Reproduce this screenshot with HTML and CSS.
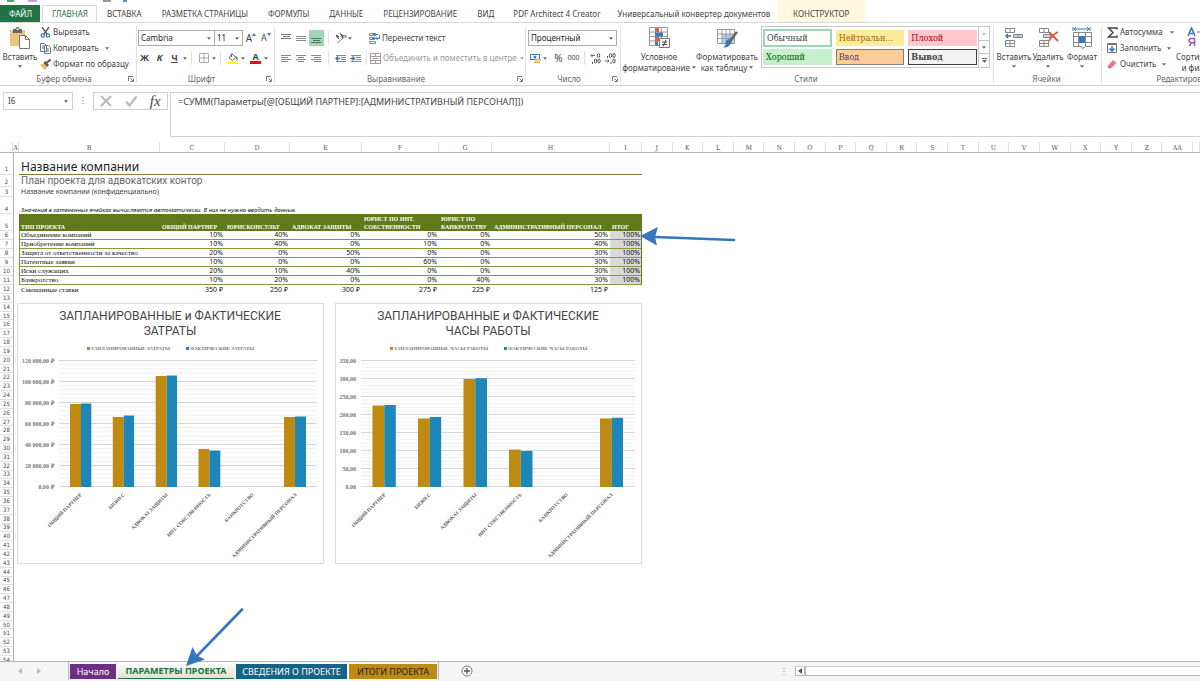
FILE: index.html
```html
<!DOCTYPE html>
<html lang="ru">
<head>
<meta charset="utf-8">
<title>Параметры проекта</title>
<link rel="stylesheet" href="styles.css">
</head>
<body>
<svg class="defs" aria-hidden="true">
  <defs>
    <symbol id="caret" viewBox="0 0 5 3"><path d="M0 0h5L2.500 3z" fill="#666"/></symbol>
    <symbol id="launch" viewBox="0 0 6 6"><path d="M.5 5V.5H5M2.500 2.500 5 5M5.500 2.500V5.500H2.500" fill="none" stroke="#777" stroke-width="1"/></symbol>
  </defs>
</svg>
<header class="top">
  <div class="quick"><i class="q-excel"></i><i class="q-save"></i><i class="q-doc"></i><i class="q-undo"></i></div>
  <nav class="tabs">
    <button class="tab file">ФАЙЛ</button>
    <button class="tab active">ГЛАВНАЯ</button>
    <button class="tab">ВСТАВКА</button>
    <button class="tab">РАЗМЕТКА СТРАНИЦЫ</button>
    <button class="tab">ФОРМУЛЫ</button>
    <button class="tab">ДАННЫЕ</button>
    <button class="tab">РЕЦЕНЗИРОВАНИЕ</button>
    <button class="tab">ВИД</button>
    <button class="tab addin">PDF Architect 4 Creator</button>
    <button class="tab addin">Универсальный конвертер документов</button>
    <button class="tab context">КОНСТРУКТОР</button>
  </nav>
</header>

<section class="ribbon">
  <div class="group clipboard">
    <div class="body">
      <button class="big paste">
        <svg width="22" height="22" viewBox="0 0 22 22"><path d="M1 3h15v16H1z" fill="#ecc57c"/><path d="M4 2h2.500a2 2 0 0 1 4 0H13v4H4z" fill="#666"/><path d="M7.500 1.500h2v1.500h-2z" fill="#fff"/><path d="M10.500 8.500h6l4 4v9h-10z" fill="#fff" stroke="#777"/><path d="M16.500 8.500v4h4" fill="none" stroke="#777"/></svg>
        <span>Вставить</span><svg class="caret"><use href="#caret"/></svg>
      </button>
      <div class="stack">
        <button class="cmd"><svg width="11" height="11" viewBox="0 0 11 11"><path d="M2 0l5 7M9 0 4 7" stroke="#555" stroke-width="1.300"/><circle cx="2.800" cy="8.500" r="1.700" fill="none" stroke="#3b78b5" stroke-width="1.200"/><circle cx="8" cy="8.500" r="1.700" fill="none" stroke="#3b78b5" stroke-width="1.200"/></svg>Вырезать</button>
        <button class="cmd"><svg width="11" height="11" viewBox="0 0 11 11"><path d="M.5.5h4l2 2v6h-6zM4.500 2.500h4l2 2v6h-6z" fill="#fff" stroke="#777"/><path d="M2 3h2M2 5h2M6 6h3M6 8h3" stroke="#3b78b5"/></svg>Копировать<svg class="caret"><use href="#caret"/></svg></button>
        <button class="cmd"><svg width="11" height="11" viewBox="0 0 11 11"><path d="M0 6l4-2 3 4-2 3z" fill="#ecb866"/><path d="M3.500 3.500 5.500 2 9 6 7 8z" fill="#555"/><path d="M7 3.500 10.500.5" stroke="#555" stroke-width="2"/></svg>Формат по образцу</button>
      </div>
    </div>
    <div class="caption"><span>Буфер обмена</span><svg class="launch"><use href="#launch"/></svg></div>
  </div>

  <div class="group font">
    <div class="rows">
      <div class="row">
        <label class="combo face"><select aria-label="Шрифт"><option>Cambria</option></select><svg class="caret"><use href="#caret"/></svg></label>
        <label class="combo size"><select aria-label="Размер"><option>11</option></select><svg class="caret"><use href="#caret"/></svg></label>
        <button class="ic grow" aria-label="Увеличить"><b>A</b><svg width="4" height="3" viewBox="0 0 4 3"><path d="M0 3 2 0l2 3z" fill="#3b78b5"/></svg></button>
        <button class="ic grow small" aria-label="Уменьшить"><b>A</b><svg width="4" height="3" viewBox="0 0 4 3"><path d="M0 0h4L2 3z" fill="#3b78b5"/></svg></button>
      </div>
      <div class="row">
        <button class="ic"><b>Ж</b></button><button class="ic"><b><em>К</em></b></button><button class="ic"><b><u>Ч</u></b></button><svg class="caret"><use href="#caret"/></svg>
        <i class="bar"></i>
        <button class="ic" aria-label="Границы"><svg width="10" height="10" viewBox="0 0 10 10"><path d="M.5.5h9v9h-9zM5 0v10M0 5h10" fill="none" stroke="#aaa"/></svg></button><svg class="caret"><use href="#caret"/></svg>
        <i class="bar"></i>
        <button class="ic" aria-label="Заливка"><svg width="12" height="11" viewBox="0 0 12 11"><path d="M5 1 9 4.500 5.500 7.500 2 4.500z" fill="#fff" stroke="#666"/><path d="M4.500 4V.5" stroke="#666"/><path d="M9 3q3 2 1 5-1-1-1-5" fill="#3b78b5"/><path d="M0 8.500h11V11H0z" fill="#ff0"/></svg></button><svg class="caret"><use href="#caret"/></svg>
        <button class="ic color" aria-label="Цвет текста"><b>A</b></button><svg class="caret"><use href="#caret"/></svg>
      </div>
    </div>
    <div class="caption"><span>Шрифт</span><svg class="launch"><use href="#launch"/></svg></div>
  </div>

  <div class="group align">
    <div class="rows">
      <div class="row">
        <button class="ic" aria-label="По верху"><svg width="11" height="11" viewBox="0 0 11 11"><path d="M0 1.500h10M2 3.500h7M0 5.500h10" stroke="#777"/></svg></button>
        <button class="ic" aria-label="По середине"><svg width="11" height="11" viewBox="0 0 11 11"><path d="M0 3.500h10M0 5.500h10M0 7.500h10" stroke="#888"/></svg></button>
        <button class="ic on" aria-label="По низу"><svg width="11" height="11" viewBox="0 0 11 11"><path d="M0 5.500h10M2 7.500h7M0 9.500h10" stroke="#4f7a62"/></svg></button>
        <i class="bar"></i>
        <button class="ic" aria-label="Ориентация"><svg width="12" height="12" viewBox="0 0 12 12"><path d="M2 11 11 4M8 3.500h3v3" fill="none" stroke="#888"/><path d="M1 3l3 4M3 6q-2-1-1-2t2 1M5 1l3 5M6 3q2-1 2 1T6.500 5" fill="none" stroke="#444"/></svg></button><svg class="caret"><use href="#caret"/></svg>
        <button class="cmd wrap"><svg width="11" height="11" viewBox="0 0 11 11"><path d="M.5.500h6v2h-6zM.5 4.500h5v2h-5zM.5 8.500h6v2h-6z" fill="#fff" stroke="#888"/><path d="M4 1.500h5M3 5.500h4" stroke="#3b78b5"/><path d="M10.500 2v3.500H7M8.500 4 7 5.500 8.500 7" fill="none" stroke="#3b78b5"/></svg>Перенести текст</button>
      </div>
      <div class="row">
        <button class="ic" aria-label="Слева"><svg width="11" height="9" viewBox="0 0 11 9"><path d="M0 1.500h10M0 3.500h7M0 5.500h10M0 7.500h7" stroke="#888"/></svg></button>
        <button class="ic" aria-label="По центру"><svg width="11" height="9" viewBox="0 0 11 9"><path d="M0 1.500h10M2 3.500h6M0 5.500h10M2 7.500h6" stroke="#888"/></svg></button>
        <button class="ic" aria-label="Справа"><svg width="11" height="9" viewBox="0 0 11 9"><path d="M0 1.500h10M3 3.500h7M0 5.500h10M3 7.500h7" stroke="#888"/></svg></button>
        <i class="bar"></i>
        <button class="ic" aria-label="Уменьшить отступ"><svg width="11" height="9" viewBox="0 0 11 9"><path d="M1 1.500h10M6 3.500h5M6 5.500h5M1 7.500h10" stroke="#888"/><path d="M5 4.500H1M3 2.500l-2 2 2 2" fill="none" stroke="#3b78b5" stroke-width="1.400"/></svg></button>
        <button class="ic" aria-label="Увеличить отступ"><svg width="11" height="9" viewBox="0 0 11 9"><path d="M1 1.500h10M6 3.500h5M6 5.500h5M1 7.500h10" stroke="#888"/><path d="M0 4.500h4M2.500 2.500l2 2-2 2" fill="none" stroke="#3b78b5" stroke-width="1.400"/></svg></button>
        <i class="bar tight"></i>
        <button class="cmd off"><svg width="11" height="11" viewBox="0 0 11 11"><path d="M.5.500h10v10H.5zM.5 3.500h10M.5 7.500h10M5.500.5v3M5.500 7.500v3M2.500 5.500h6" fill="none" stroke="#a49ba4"/></svg>Объединить и поместить в центре<svg class="caret"><use href="#caret"/></svg></button>
      </div>
    </div>
    <div class="caption"><span>Выравнивание</span><svg class="launch"><use href="#launch"/></svg></div>
  </div>

  <div class="group number">
    <div class="rows">
      <div class="row">
        <label class="combo format"><select aria-label="Числовой формат"><option>Процентный</option></select><svg class="caret"><use href="#caret"/></svg></label>
      </div>
      <div class="row">
        <button class="ic money" aria-label="Финансовый"><svg width="11" height="11" viewBox="0 0 11 11"><path d="M.5 1.500h9v5h-9z" fill="#fff" stroke="#3b78b5"/><circle cx="5" cy="4" r="1.500" fill="#3b78b5"/><path d="M5 6h6v1.500H5zM4 8.500h6V10H4z" fill="#e9ac4f"/></svg></button><svg class="caret"><use href="#caret"/></svg>
        <button class="ic percent">%</button><button class="ic thousand">000</button>
        <i class="bar tight"></i>
        <button class="ic" aria-label="Увеличить разрядность"><svg width="11" height="11" viewBox="0 0 11 11"><path d="M5 2.500H1M2.500 1 1 2.500 2.500 4" fill="none" stroke="#3b78b5"/><ellipse cx="8.500" cy="2.500" rx="1.200" ry="2" fill="none" stroke="#555"/><ellipse cx="5.500" cy="8" rx="1.200" ry="2" fill="none" stroke="#555"/><ellipse cx="9" cy="8" rx="1.200" ry="2" fill="none" stroke="#555"/><path d="M2.500 9v2" stroke="#555"/></svg></button>
        <button class="ic" aria-label="Уменьшить разрядность"><svg width="11" height="11" viewBox="0 0 11 11"><path d="M0 8h4M2.500 6.500 4 8 2.500 9.500" fill="none" stroke="#3b78b5"/><ellipse cx="5.500" cy="2.500" rx="1.200" ry="2" fill="none" stroke="#555"/><ellipse cx="9" cy="2.500" rx="1.200" ry="2" fill="none" stroke="#555"/><ellipse cx="9" cy="8" rx="1.200" ry="2" fill="none" stroke="#555"/><path d="M2.500 3v2M6 9v2" stroke="#555"/></svg></button>
      </div>
    </div>
    <div class="caption"><span>Число</span><svg class="launch"><use href="#launch"/></svg></div>
  </div>

  <div class="group styles">
    <div class="body">
      <button class="big wide">
        <svg width="22" height="22" viewBox="0 0 22 22"><path d="M1.500.5h18v18h-18zM1.500 5h18M1.500 9.500h18M1.500 14h18M7.500.5v18M13.500.5v18" fill="#fff" stroke="#999"/><path d="M7 1h4v4H7zM7 10h4v4H7z" fill="#e0603c"/><path d="M7 5.500h8v4H7zM7 14.500h3v4H7z" fill="#3b78b5"/><path d="M11.500 11.500h10v9h-10z" fill="#fff" stroke="#777"/><path d="M14 15h5M14 17.500h5M18 13l-3 6.500" stroke="#444"/></svg>
        <span>Условное</span><span>форматирование <svg class="caret"><use href="#caret"/></svg></span>
      </button>
      <button class="big wide">
        <svg width="22" height="22" viewBox="0 0 22 22"><path d="M1.500 2.500h17v14h-17z" fill="#fff" stroke="#999"/><path d="M6 7h12v9H6z" fill="#b9d0e8"/><path d="M1.500 7h17M1.500 11.500h17M6 2.500v14M10 2.500v14M14 2.500v14" fill="none" stroke="#999"/><path d="M21 5l-7 9" stroke="#666" stroke-width="2.500"/><path d="M13 12l3 3q-3 6-9 5.500 3-2 2.500-4.500Q10.500 12.500 13 12" fill="#3b78b5"/></svg>
        <span>Форматировать</span><span>как таблицу <svg class="caret"><use href="#caret"/></svg></span>
      </button>
      <div class="gallery">
        <div class="swatches">
          <button class="sw normal">Обычный</button><button class="sw neutral">Нейтральн...</button><button class="sw bad">Плохой</button>
          <button class="sw good">Хороший</button><button class="sw input">Ввод</button><button class="sw output">Вывод</button>
        </div>
        <div class="steps">
          <button aria-label="Вверх"><svg class="caret up"><use href="#caret"/></svg></button>
          <button aria-label="Вниз"><svg class="caret"><use href="#caret"/></svg></button>
          <button class="more" aria-label="Ещё"><svg width="5" height="5" viewBox="0 0 5 5"><path d="M0 .5h5" stroke="#666"/><path d="M0 2h5L2.500 5z" fill="#666"/></svg></button>
        </div>
      </div>
    </div>
    <div class="caption"><span>Стили</span></div>
  </div>

  <div class="group cells">
    <div class="body">
      <button class="big"><svg width="22" height="22" viewBox="0 0 22 22"><path d="M2.500 1.500h9v4h-9zM7 1.500v4M2.500 13.500h9v6h-9zM7 13.500v6M2.500 16.500h9" fill="#fff" stroke="#888"/><path d="M10.500 7.500h9v3h-9zM15 7.500v3" fill="#c5d9ee" stroke="#888"/><path d="M8 9H3M5 7 3 9l2 2" fill="none" stroke="#3b78b5" stroke-width="1.500"/></svg><span>Вставить</span><svg class="caret"><use href="#caret"/></svg></button>
      <button class="big"><svg width="22" height="22" viewBox="0 0 22 22"><path d="M2.500 1.500h9v4h-9zM7 1.500v4M2.500 13.500h9v6h-9zM7 13.500v6M2.500 16.500h9" fill="#fff" stroke="#888"/><path d="M6.500 7.500h7v3h-7z" fill="#c5d9ee" stroke="#888"/><path d="M12 5l9 9M21 5q-6 3-9 9" fill="none" stroke="#e0553a" stroke-width="1.800"/></svg><span>Удалить</span><svg class="caret"><use href="#caret"/></svg></button>
      <button class="big"><svg width="22" height="22" viewBox="0 0 22 22"><path d="M3 2h15M5 0 3 2l2 2M16 0l2 2-2 2M2 0v4M19 0v4" fill="none" stroke="#3b78b5"/><path d="M2.500 5.500h18v14h-6l-3 2-1-2h-8zM2.500 9.500h18M2.500 15.500h18M7.500 5.500v14M14.500 5.500v14" fill="#fff" stroke="#888"/><path d="M8 9h6v7H8z" fill="#3b78b5"/></svg><span>Формат</span><svg class="caret"><use href="#caret"/></svg></button>
    </div>
    <div class="caption"><span>Ячейки</span></div>
  </div>

  <div class="group editing">
    <div class="body">
      <div class="stack">
        <button class="cmd"><svg width="11" height="11" viewBox="0 0 11 11"><path d="M10 2.500V1H1.500L6 5.500 1.500 10H10V8.500" fill="none" stroke="#444" stroke-width="1.500"/></svg>Автосумма<svg class="caret far"><use href="#caret"/></svg></button>
        <button class="cmd"><svg width="11" height="11" viewBox="0 0 11 11"><path d="M.5.500h9v9h-9z" fill="#fff" stroke="#777"/><path d="M0 1.500h10" stroke="#777"/><path d="M5 3v5M2.500 5.500 5 8l2.500-2.500" fill="none" stroke="#3b78b5" stroke-width="1.600"/></svg>Заполнить<svg class="caret"><use href="#caret"/></svg></button>
        <button class="cmd"><svg width="11" height="11" viewBox="0 0 11 11"><path d="M6 1l3.500 3-5 5H2L.5 7z" fill="#e77b8b"/><path d="M.5 7 4 9.500H2z" fill="#c9566a"/></svg>Очистить<svg class="caret"><use href="#caret"/></svg></button>
      </div>
      <button class="big sort"><svg width="28" height="22" viewBox="0 0 28 22"><path d="M3 9 6.500 1 10 9M4 6.500h5" fill="none" stroke="#3b78b5" stroke-width="1.600"/><path d="M9.500 19v-7.500H6q-2 .5-2 2t2 2.200h3.500M7 15.500 4 19" fill="none" stroke="#8e57b8" stroke-width="1.500"/><path d="M12 5h9l-4 5v6" fill="none" stroke="#666"/></svg><span>Сортировка</span><span>и фильтр</span></button>
    </div>
    <div class="caption"><span>Редактирование</span></div>
  </div>
</section>

<section class="formula">
  <div class="name"><input value="I6" aria-label="Имя ячейки"><svg class="caret"><use href="#caret"/></svg></div>
  <i class="dots"></i>
  <div class="fx">
    <button aria-label="Отмена"><svg width="12" height="12" viewBox="0 0 12 12"><path d="M1 1l10 10M11 1 1 11" stroke="#b8b8b8" stroke-width="2"/></svg></button>
    <button aria-label="Ввод"><svg width="12" height="12" viewBox="0 0 12 12"><path d="M1 6.500 4.500 10.500 11.500 1.500" fill="none" stroke="#bbb" stroke-width="2.200"/></svg></button>
    <button class="fn">fx</button>
  </div>
  <textarea aria-label="Строка формул" spellcheck="false">=СУММ(Параметры[@[ОБЩИЙ ПАРТНЕР]:[АДМИНИСТРАТИВНЫЙ ПЕРСОНАЛ]])</textarea>
</section>

<main class="grid">
  <div class="cols">
    <span class="corner"></span><span>A</span><span>B</span><span>C</span><span>D</span><span>E</span><span>F</span><span>G</span><span>H</span><span>I</span><span>J</span><span>K</span><span>L</span><span>M</span><span>N</span><span>O</span><span>P</span><span>Q</span><span>R</span><span>S</span><span>T</span><span>U</span><span>V</span><span>W</span><span>X</span><span>Y</span><span>Z</span><span>AA</span><span></span>
  </div>
  <div class="sheet">
    <div class="nums">
      <span class="r1">1</span><span class="r2">2</span><span class="r3">3</span><span class="r4">4</span><span class="r5">5</span><span>6</span><span>7</span><span>8</span><span>9</span><span>10</span><span>11</span><span>12</span>
      <div class="rest"><span>13</span><span>14</span><span>15</span><span>16</span><span>17</span><span>18</span><span>19</span><span>20</span><span>21</span><span>22</span><span>23</span><span>24</span><span>25</span><span>26</span><span>27</span><span>28</span><span>29</span><span>30</span><span>31</span><span>32</span><span>33</span><span>34</span><span>35</span><span>36</span><span>37</span><span>38</span><span>39</span><span>40</span><span>41</span><span>42</span><span>43</span><span>44</span><span>45</span><span>46</span><span>47</span><span>48</span><span>49</span><span>50</span><span>51</span><span>52</span><span>53</span><span>54</span></div>
    </div>
    <div class="page">
      <h1>Название компании</h1>
      <h2>План проекта для адвокатских контор</h2>
      <p class="sub">Название компании (конфиденциально)</p>
      <p class="note">Значения в затененных ячейках вычисляются автоматически. В них не нужно вводить данные.</p>
      <table>
        <colgroup><col class="cb"><col class="cc"><col class="cc"><col class="ce"><col class="cf"><col class="cg"><col class="ch"><col class="ci"></colgroup>
        <thead><tr><th>ТИП ПРОЕКТА</th><th>ОБЩИЙ ПАРТНЕР</th><th>ЮРИСКОНСУЛЬТ</th><th>АДВОКАТ ЗАЩИТЫ</th><th>ЮРИСТ ПО ИНТ.<br>СОБСТВЕННОСТИ</th><th>ЮРИСТ ПО<br>БАНКРОТСТВУ</th><th>АДМИНИСТРАТИВНЫЙ ПЕРСОНАЛ</th><th>ИТОГ</th></tr></thead>
        <tbody>
          <tr><td>Объединение компаний</td><td>10%</td><td>40%</td><td>0%</td><td>0%</td><td>0%</td><td>50%</td><td>100%</td></tr>
          <tr><td>Приобретение компаний</td><td>10%</td><td>40%</td><td>0%</td><td>10%</td><td>0%</td><td>40%</td><td>100%</td></tr>
          <tr><td>Защита от ответственности за качество</td><td>20%</td><td>0%</td><td>50%</td><td>0%</td><td>0%</td><td>30%</td><td>100%</td></tr>
          <tr><td>Патентные заявки</td><td>10%</td><td>0%</td><td>0%</td><td>60%</td><td>0%</td><td>30%</td><td>100%</td></tr>
          <tr><td>Иски служащих</td><td>20%</td><td>10%</td><td>40%</td><td>0%</td><td>0%</td><td>30%</td><td>100%</td></tr>
          <tr><td>Банкротство</td><td>10%</td><td>20%</td><td>0%</td><td>0%</td><td>40%</td><td>30%</td><td>100%</td></tr>
        </tbody>
        <tfoot><tr><td>Смешанные ставки</td><td>350 ₽</td><td>250 ₽</td><td>300 ₽</td><td>275 ₽</td><td>225 ₽</td><td>125 ₽</td><td></td></tr></tfoot>
      </table>
      <div class="charts">
        <svg class="chart" viewBox="18 304 305 259" role="img" aria-label="Запланированные и фактические затраты">
          <defs><pattern id="m1" x="0" y="360" width="10" height="4.200" patternUnits="userSpaceOnUse"><path d="M0 .5h10" stroke="#efefef"/></pattern></defs>
          <text class="ttl" x="170" y="320">ЗАПЛАНИРОВАННЫЕ и ФАКТИЧЕСКИЕ</text><text class="ttl" x="170" y="335">ЗАТРАТЫ</text>
          <path class="plan" d="M87 347h3v3h-3z"/><text class="lg" x="91" y="350">ЗАПЛАНИРОВАННЫЕ ЗАТРАТЫ</text>
          <path class="fact" d="M186 347h3v3h-3z"/><text class="lg" x="190" y="350">ФАКТИЧЕСКИЕ ЗАТРАТЫ</text>
          <path d="M59 360h257.500v126H59z" fill="url(#m1)"/>
          <path class="maj" d="M59 360.500h258M59 381.500h258M59 402.500h258M59 423.500h258M59 444.500h258M59 465.500h258M59 486.500h258"/>
          <g class="val"><text x="53.500" y="363">120 000,00 ₽</text><text x="53.500" y="384">100 000,00 ₽</text><text x="53.500" y="405">80 000,00 ₽</text><text x="53.500" y="426">60 000,00 ₽</text><text x="53.500" y="447">40 000,00 ₽</text><text x="53.500" y="468">20 000,00 ₽</text><text x="53.500" y="489">0,00 ₽</text></g>
          <path class="plan" d="M70 404h11v83H70zM112.800 417h11v70h-11zM155.700 376h11v111h-11zM198.500 449h11v38h-11zM284 417h11v70h-11z"/>
          <path class="fact" d="M81 403.500h10.300v83.500H81zM123.800 415.500h10.300v71.500h-10.300zM166.700 375.500H177V487h-10.300zM209.500 450.500h10.800V487h-10.800zM295 416.500h11V487h-11z"/>
          <g class="cat"><text transform="translate(82 495)rotate(-45)">ОБЩИЙ ПАРТНЕР</text><text transform="translate(125 495)rotate(-45)">БИЗНЕС</text><text transform="translate(168 495)rotate(-45)">АДВОКАТ ЗАЩИТЫ</text><text transform="translate(211 495)rotate(-45)">ИНТ. СОБСТВЕННОСТЬ</text><text transform="translate(254 495)rotate(-45)">БАНКРОТСТВО</text><text transform="translate(297 495)rotate(-45)">АДМИНИСТРАТИВНЫЙ ПЕРСОНАЛ</text></g>
        </svg>
        <svg class="chart" viewBox="336 304 305 259" role="img" aria-label="Запланированные и фактические часы работы">
          <defs><pattern id="m2" x="0" y="360" width="10" height="3.600" patternUnits="userSpaceOnUse"><path d="M0 .5h10" stroke="#efefef"/></pattern></defs>
          <text class="ttl" x="488" y="320">ЗАПЛАНИРОВАННЫЕ и ФАКТИЧЕСКИЕ</text><text class="ttl" x="488" y="335">ЧАСЫ РАБОТЫ</text>
          <path class="plan" d="M390 347h3v3h-3z"/><text class="lg" x="394" y="350">ЗАПЛАНИРОВАННЫЕ ЧАСЫ РАБОТЫ</text>
          <path class="fact" d="M504 347h3v3h-3z"/><text class="lg" x="508" y="350">ФАКТИЧЕСКИЕ ЧАСЫ РАБОТЫ</text>
          <path d="M361 360h274v126H361z" fill="url(#m2)"/>
          <path class="maj" d="M361 360.500h274M361 378.500h274M361 396.500h274M361 414.500h274M361 432.500h274M361 450.500h274M361 468.500h274M361 486.500h274"/>
          <g class="val"><text x="356" y="363">350,00</text><text x="356" y="381">300,00</text><text x="356" y="399">250,00</text><text x="356" y="417">200,00</text><text x="356" y="435">150,00</text><text x="356" y="453">100,00</text><text x="356" y="471">50,00</text><text x="356" y="489">0,00</text></g>
          <path class="plan" d="M372.500 405.500h11.800V487h-11.800zM418 418.500h11.800V487H418zM463.500 379h11.800v108h-11.800zM509 449.500h11.800V487H509zM600 418.500h11.800V487H600z"/>
          <path class="fact" d="M384.300 405h11.500v82h-11.500zM429.800 417h11.400v70h-11.400zM475.300 378.300h11.700V487h-11.700zM520.800 451h11.700v36h-11.700zM611.800 417.800H623V487h-11.200z"/>
          <g class="cat"><text transform="translate(386 495)rotate(-45)">ОБЩИЙ ПАРТНЕР</text><text transform="translate(431 495)rotate(-45)">БИЗНЕС</text><text transform="translate(477 495)rotate(-45)">АДВОКАТ ЗАЩИТЫ</text><text transform="translate(522 495)rotate(-45)">ИНТ. СОБСТВЕННОСТЬ</text><text transform="translate(568 495)rotate(-45)">БАНКРОТСТВО</text><text transform="translate(613 495)rotate(-45)">АДМИНИСТРАТИВНЫЙ ПЕРСОНАЛ</text></g>
        </svg>
      </div>
    </div>
    <svg class="marks" width="760" height="528" viewBox="0 153 760 528" aria-hidden="true">
      <path d="M734 240 655 237M242 609.500 195 658" stroke="#3576bd" stroke-width="2.600" stroke-linecap="round"/>
      <path d="M640 236l18-9-3 10 2 8.500zM186 666l6.500-19 4.500 8.500 8 4z" fill="#3576bd"/>
    </svg>
  </div>
</main>

<footer class="bottom">
  <div class="nav"><button aria-label="Назад"><svg width="4" height="6" viewBox="0 0 4 6"><path d="M4 0v6L0 3z" fill="#bbb"/></svg></button><button aria-label="Вперёд"><svg width="4" height="6" viewBox="0 0 4 6"><path d="M0 0v6l4-3z" fill="#bbb"/></svg></button></div>
  <div class="books">
    <button class="book start">Начало</button>
    <button class="book current">ПАРАМЕТРЫ ПРОЕКТА</button>
    <button class="book info">СВЕДЕНИЯ О ПРОЕКТЕ</button>
    <button class="book total">ИТОГИ ПРОЕКТА</button>
  </div>
  <button class="add" aria-label="Новый лист"><svg width="12" height="12" viewBox="0 0 12 12"><circle cx="6" cy="6" r="5" fill="#fff" stroke="#777"/><path d="M3 6h6M6 3v6" stroke="#555" stroke-width="1.300"/></svg></button>
  <i class="dots"></i>
  <div class="scroll"><button aria-label="Влево"><svg width="4" height="6" viewBox="0 0 4 6"><path d="M4 0v6L0 3z" fill="#555"/></svg></button></div>
</footer>
</body>
</html>
```
FILE: styles.css
```css
* { box-sizing: border-box; }
html, body { height: 100%; }
body {
  margin: 0;
  display: flex;
  flex-direction: column;
  overflow: hidden;
  background: #fff;
  color: #444;
  font: 8px/10px "Noto Sans", "Open Sans", sans-serif;
}
button, input, select, textarea {
  font: inherit;
  color: inherit;
  margin: 0;
  padding: 0;
  border: 0;
  background: none;
  border-radius: 0;
  white-space: nowrap;
}
svg { display: block; flex: none; }
h1, h2, p { margin: 0; font-weight: 400; }
.defs { position: absolute; width: 0; height: 0; }
.caret { width: 4px; height: 3px; }
.launch { width: 6px; height: 6px; }

/* title strip and ribbon tabs */
.quick { height: 5px; display: flex; align-items: flex-start; padding-left: 7px; }
.quick i { height: 2px; }
.q-excel { width: 7px; background: #4ea577; margin-right: 14px; }
.q-save { width: 9px; background: #c9a3da; margin-right: 66px; }
.q-doc { width: 8px; background: #999; margin-right: 12px; }
.q-undo { width: 4px; background: #5c93cc; }
.tabs { display: flex; height: 17px; }
.tab { padding: 0 9px; margin-right: 2px; font-size: 8px; line-height: 17px; }
.file { width: 40px; background: #217346; color: #fff; }
.active { width: 55px; margin-right: 1px; background: #fff; border: 1px solid #d8d8d8; border-bottom: 0; color: #217346; line-height: 15px; padding-bottom: 1px; }
.addin { padding: 0 8px; margin-right: 1px; }
.context { width: 88px; margin: -5px 0 0 -2px; padding-top: 5px; background: #fff8e1; }

/* ribbon */
.ribbon { display: flex; height: 64px; border-top: 1px solid #d8d8d8; border-bottom: 1px solid #d0d0d0; overflow: hidden; flex: none; }
.group { flex: none; display: flex; flex-direction: column; padding: 1px 0; position: relative; }
.group::after { content: ""; position: absolute; right: 0; top: 3px; bottom: 2px; width: 1px; background: #e1e1e1; }
.body { display: flex; flex: 1; }
.rows { flex: 1; padding-top: 4px; }
.row { display: flex; align-items: center; height: 20px; }
.caption { display: flex; height: 10px; align-items: center; color: #666; padding-right: 3px; }
.caption span { flex: 1; text-align: center; }
.clipboard { width: 137px; }
.font { width: 138px; }
.align { width: 251px; }
.number { width: 95px; }
.styles { width: 373px; }
.cells { width: 108px; }
.editing { width: 176px; }
.big { display: flex; flex-direction: column; align-items: center; padding-top: 3px; width: 34px; flex: none; }
.big > svg:first-child { margin-bottom: 2px; }
.big > span { display: flex; align-items: center; gap: 2px; line-height: 11px; }
.big > .caret { margin-top: 3px; }
.paste { width: 40px; }
.wide { width: 68px; }
.styles .body { padding-left: 4px; }
.stack { display: flex; flex-direction: column; }
.cmd { display: flex; align-items: center; gap: 2px; height: 16px; }
.cmd .caret { margin-left: 4px; }
.cmd .far { margin-left: 5px; }
.wrap { margin-left: 17px; }
.off { color: #999; }
.off .caret { opacity: .6; margin-left: 1px; }

.ic { width: 15px; height: 16px; display: flex; align-items: center; justify-content: center; flex: none; font-size: 9px; }
.on { background: #9fd5b7; }
.bar { width: 1px; height: 14px; background: #e1e1e1; margin: 0 4px; }
.tight { margin: 0 3px; }
.combo { position: relative; flex: none; height: 16px; border: 1px solid #ababab; color: #222; }
.combo select { appearance: none; width: 100%; height: 14px; padding-left: 2px; display: block; }
.combo .caret { position: absolute; right: 3px; top: 6px; }
.face { width: 77px; margin-left: 1px; }
.size { width: 29px; margin-left: -1px; }
.format { width: 89px; margin-left: 2px; }
.font .row > .caret { margin-left: 1px; }
.grow { margin-left: 1px; width: 14px; }
.grow b { font-weight: 400; font-size: 10px; }
.grow svg { margin-bottom: 8px; }
.grow.small b { font-size: 9px; }
.color { margin-left: 3px; }
.color b { border-bottom: 3px solid red; line-height: 8px; padding: 0 2px; }
.money { margin-left: 2px; }
.percent { font-size: 10px; margin-left: 4px; }
.thousand { font-size: 7px; }
.align .rows { padding-left: 4px; }

.gallery { display: flex; flex: 1; margin: 2px 4px 0 0; height: 42px; border: 1px solid #c6c6c6; }
.swatches { flex: 1; display: grid; grid-template-columns: repeat(3, 1fr); grid-template-rows: 18px 16px; gap: 2px 4px; padding: 1px; align-content: center; }
.sw { font: 9px/14px "DejaVu Serif Condensed", "DejaVu Serif", serif; text-align: left; padding-left: 3px; overflow: hidden; }
.normal { border: 2px solid #9fd5b7; padding-left: 2px; }
.neutral { background: #ffeb9c; color: #9c6500; margin: 1px 0; }
.bad { background: #ffc7ce; color: #9c0006; margin: 1px 0; }
.good { background: #c6efce; color: #006100; }
.input { background: #ffcc99; color: #3f3f76; border: 1px solid #7f7f7f; padding-left: 2px; }
.output { background: #f2f2f2; color: #3f3f3f; border: 1px solid #3f3f3f; font-weight: 700; padding-left: 2px; }
.steps { width: 11px; display: flex; flex-direction: column; border-left: 1px solid #c6c6c6; }
.steps button { flex: 1; display: flex; align-items: center; justify-content: center; }
.steps button + button { border-top: 1px solid #c6c6c6; }
.up { transform: rotate(180deg); opacity: .5; }
.cells .body { padding-left: 3px; }
.editing .body { padding-left: 5px; }
.editing .stack { width: 70px; }
.sort { width: 44px; }

/* formula bar */
.formula { display: flex; align-items: flex-start; padding: 6px 0 4px 3px; height: 56px; flex: none; }
.name { width: 70px; height: 18px; border: 1px solid #d0d0d0; display: flex; align-items: center; padding: 0 4px; }
.name input { flex: 1; width: 10px; }
.dots { width: 2px; height: 8px; margin: 5px 9px 0; background: repeating-linear-gradient(#bbb 0 1px, transparent 1px 3px); }
.fx { width: 75px; height: 18px; border: 1px solid #d0d0d0; display: flex; align-items: center; justify-content: space-around; }
.fn { font: italic 15px/16px "Liberation Serif", serif; }
.formula textarea { flex: 1; height: 45px; margin-left: 2px; padding: 4px 7px; border: 1px solid #d0d0d0; border-right: 0; resize: none; font-size: 9px; }

/* sheet */
.grid { flex: 1; min-height: 0; display: flex; flex-direction: column; }
.cols { display: grid; grid-template-columns: 13px 6px 141px 65px 65px 72px 77px 53px 118px 32px repeat(18, 1fr) 7px; height: 11px; border-bottom: 1px solid #b5b5b5; font: 7px/12px "DejaVu Serif Condensed", "DejaVu Serif", serif; text-align: center; color: #555; }
.cols span { border-right: 1px solid #e1e1e1; height: 10px; }
.sheet { flex: 1; min-height: 0; display: flex; position: relative; }
.nums { width: 14px; border-right: 1px solid #b5b5b5; display: flex; flex-direction: column; overflow: hidden; font: 6px/8px "DejaVu Sans Condensed", "DejaVu Sans", sans-serif; text-align: center; }
.nums span { height: 9px; flex: none; border-bottom: 1px solid #e1e1e1; display: flex; align-items: flex-end; justify-content: center; }
.nums .r1 { height: 22px; padding-bottom: 1px; }
.nums .r2 { height: 12px; }
.nums .r3 { height: 10px; }
.nums .r4 { height: 17px; }
.nums .r5 { height: 17px; }
.rest { flex: 1; min-height: 0; display: flex; flex-direction: column; margin-bottom: -4px; }
.rest span { flex: 1; min-height: 0; height: auto; align-items: center; }
.page { padding-left: 3px; }
h1 { height: 22px; margin-left: 2px; padding: 6px 2px 0; width: 623px; border-bottom: 1px solid #8a7440; font-size: 12px; line-height: 16px; color: #222; }
h2 { height: 12px; padding-left: 4px; font: 10px/12px Roboto, sans-serif; color: #666; }
.sub { height: 10px; padding-left: 4px; font-size: 7px; line-height: 10px; }
.note { height: 17px; padding: 9px 4px 0; font: italic 6px/8px "Noto Sans", sans-serif; color: #111; }
table { width: 623px; margin-left: 2px; table-layout: fixed; border-collapse: separate; border-spacing: 0; font: 7px/8px "Liberation Serif", serif; color: #111; }
.cb { width: 141px; }
.cc { width: 65px; }
.ce { width: 72px; }
.cf { width: 77px; }
.cg { width: 53px; }
.ch { width: 118px; }
.ci { width: 32px; }
th { height: 17px; padding: 0 2px; background: #5e7a1b; color: #fff; text-align: left; vertical-align: bottom; white-space: nowrap; font-size: 6px; }
td { height: 9px; padding: 0 2px; text-align: right; white-space: nowrap; }
td:first-child { text-align: left; }
td:not(:first-child) { font-family: "Noto Sans", sans-serif; }
tbody td { border-bottom: 1px solid #7f9a3f; }
tbody td:first-child { border-left: 1px solid #7f9a3f; padding-left: 1px; }
tbody td:last-child { background: #d9d9d9; border-right: 1px solid #5e7a1b; padding-right: 1px; }
.charts { display: flex; gap: 11px; padding-top: 9px; }
.chart { width: 307px; height: 261px; border: 1px solid #dcdcdc; }
.ttl { font: 12px Roboto, sans-serif; text-anchor: middle; fill: #444; }
.lg { font: 700 5px "Liberation Serif", serif; fill: #777; }
.val { font: 700 6px "Liberation Serif", serif; fill: #777; text-anchor: end; }
.cat { font: 700 5px "Liberation Serif", serif; fill: #555; text-anchor: end; }
.plan { fill: #bf8a10; }
.fact { fill: #1c87b8; }
.maj { stroke: #d6d6d6; fill: none; }
.marks { position: absolute; left: 0; top: 0; z-index: 2; pointer-events: none; }

/* sheet tabs */
.bottom { height: 20px; flex: none; display: flex; align-items: flex-start; background: #f5f5f5; border-top: 1px solid #b5b5b5; }
.nav { width: 68px; padding-left: 18px; display: flex; gap: 15px; padding-top: 6px; }
.books { display: flex; gap: 2px; border-left: 1px solid #b5b5b5; border-right: 1px solid #b5b5b5; padding: 0 1px; }
.book { height: 15px; margin-top: 2px; font-size: 9px; line-height: 15px; }
.start { width: 46px; background: #6b2f87; color: #fff; }
.current { width: 116px; height: 17px; margin-top: 0; background: linear-gradient(#fff, #dfe3cf); border-bottom: 1px solid #217346; color: #217346; font-weight: 700; }
.info { width: 111px; background: #146488; color: #fff; }
.total { width: 88px; background: #bf8a10; color: #222; }
.add { margin: 3px auto 0 22px; }
.bottom .dots { margin: 6px 10px 0; }
.scroll { width: 405px; height: 10px; margin-top: 4px; border: 1px solid #b5b5b5; border-top-color: #d0d0d0; border-right: 0; background: #fff; }
.scroll button { width: 10px; height: 8px; border-right: 2px solid #b5b5b5; display: flex; align-items: center; justify-content: center; }
```
